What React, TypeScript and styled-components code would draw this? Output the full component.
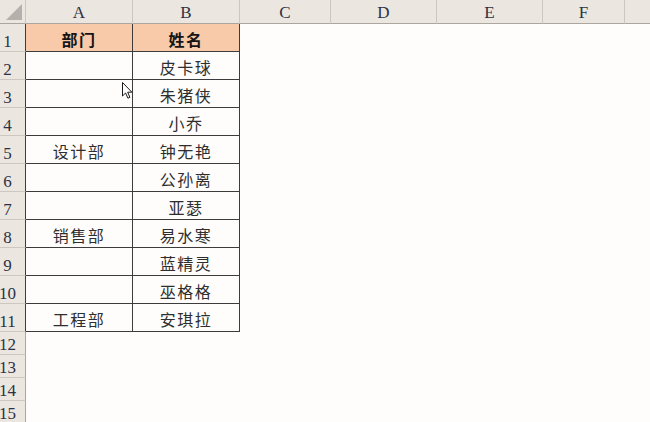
import React from "react";
import styled, { createGlobalStyle } from "styled-components";

const Global = createGlobalStyle`
  html, body { margin: 0; padding: 0; background: #fefdfc; }
  body { width: 650px; height: 422px; overflow: hidden; }
`;

const COLS = [
  { key: "A", w: 107 },
  { key: "B", w: 107 },
  { key: "C", w: 91 },
  { key: "D", w: 106 },
  { key: "E", w: 106 },
  { key: "F", w: 82 },
  { key: "G", w: 60 },
];

const ROW_H = (r: number) => (r <= 11 ? 28 : 23);

const DATA: [string, string][] = [
  ["部门", "姓名"],
  ["", "皮卡球"],
  ["", "朱猪侠"],
  ["", "小乔"],
  ["设计部", "钟无艳"],
  ["", "公孙离"],
  ["", "亚瑟"],
  ["销售部", "易水寒"],
  ["", "蓝精灵"],
  ["", "巫格格"],
  ["工程部", "安琪拉"],
];

const Sheet = styled.div`
  position: relative;
  display: grid;
  grid-template-columns: 26px ${COLS.map((c) => c.w + "px").join(" ")};
  grid-template-rows: 24px ${Array.from({ length: 15 }, (_, i) => ROW_H(i + 1) + "px").join(" ")};
  width: 650px;
  height: 422px;
  overflow: hidden;
  background: #fefdfc;
`;

const Corner = styled.div`
  position: relative;
  box-sizing: border-box;
  background: #ece6e0;
  border-right: 1px solid #cdc7c1;
  border-bottom: 1px solid #aca69f;
`;

const SelectAll = styled.div`
  position: absolute;
  right: 3px;
  bottom: 3px;
  width: 0;
  height: 0;
  border-left: 16px solid transparent;
  border-bottom: 16px solid #b5b0ab;
`;

const ColHead = styled.div`
  box-sizing: border-box;
  background: #ece6e0;
  border-right: 1px solid #cdc7c1;
  border-bottom: 1px solid #aca69f;
  display: flex;
  align-items: flex-end;
  justify-content: center;
  padding-bottom: 2px;
  font-family: "Liberation Serif", "DejaVu Serif", serif;
  font-size: 17px;
  line-height: 17px;
  color: #2b3146;
`;

const RowHead = styled.div<{ $dark?: boolean }>`
  box-sizing: border-box;
  background: #ece6e0;
  border-bottom: 1px solid #cdc7c1;
  border-right: 1px solid ${(p) => (p.$dark ? "#3c3c3c" : "#aca69f")};
  display: flex;
  align-items: flex-end;
  justify-content: center;
  padding-right: 10px;
  padding-bottom: 1px;
  font-family: "Liberation Serif", "DejaVu Serif", serif;
  font-size: 17px;
  line-height: 17px;
  color: #2b3146;
  white-space: nowrap;
`;

const Cell = styled.div<{ $table?: boolean; $header?: boolean }>`
  box-sizing: border-box;
  background: ${(p) => (p.$header ? "#f8caa9" : "transparent")};
  border-right: ${(p) => (p.$table ? "1px solid #3c3c3c" : "none")};
  border-bottom: ${(p) => (p.$table ? "1px solid #3c3c3c" : "none")};
  display: flex;
  align-items: center;
  justify-content: center;
  padding-top: 3px;
  font-family: "Noto Sans CJK SC", "Noto Sans", sans-serif;
  font-size: 16px;
  letter-spacing: 1.5px;
  font-weight: ${(p) => (p.$header ? 700 : 400)};
  color: ${(p) => (p.$header ? "#151515" : "#2e2e2e")};
  white-space: nowrap;
`;

const Cursor = styled.svg`
  position: absolute;
  left: 122px;
  top: 82px;
  width: 11px;
  height: 17px;
  pointer-events: none;
`;

export default function App() {
  const rows = Array.from({ length: 15 }, (_, i) => i + 1);
  return (
    <>
      <Global />
      <Sheet>
        <Corner>
          <SelectAll />
        </Corner>
        {COLS.map((c) => (
          <ColHead key={c.key}>{c.key === "G" ? "" : c.key}</ColHead>
        ))}
        {rows.map((r) => {
          const inTable = r <= 11;
          const d = inTable ? DATA[r - 1] : ["", ""];
          return (
            <React.Fragment key={r}>
              <RowHead $dark={inTable}>{r}</RowHead>
              {COLS.map((c, ci) => {
                const isTable = inTable && ci < 2;
                return (
                  <Cell key={c.key} $table={isTable} $header={isTable && r === 1}>
                    {ci < 2 ? d[ci] : ""}
                  </Cell>
                );
              })}
            </React.Fragment>
          );
        })}
        <Cursor viewBox="0 0 11 17">
          <path
            d="M0.5 0.5 L0.5 14 L3.6 11 L5.9 16.2 L7.9 15.3 L5.7 10.2 L9.9 10.2 Z"
            fill="#ffffff"
            stroke="#1a1a1a"
            strokeWidth="1"
            strokeLinejoin="miter"
          />
        </Cursor>
      </Sheet>
    </>
  );
}
